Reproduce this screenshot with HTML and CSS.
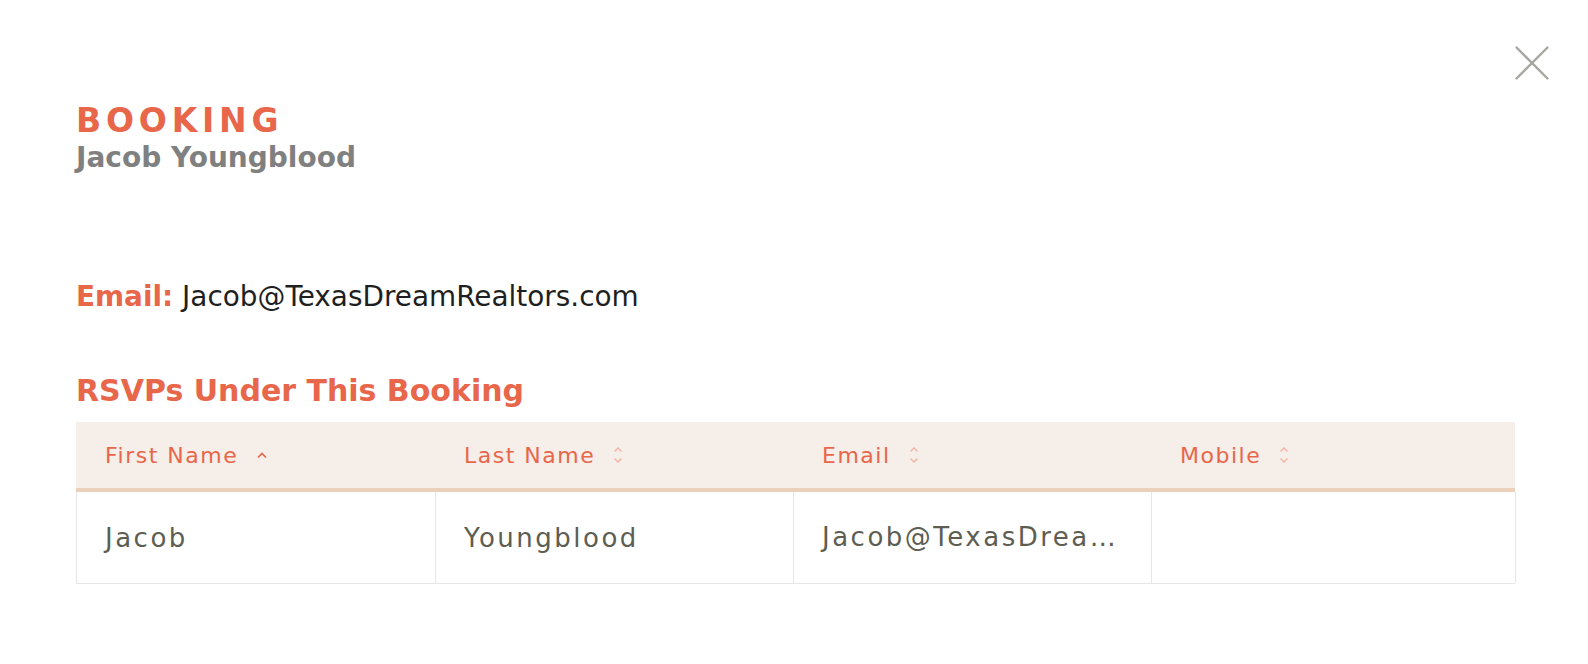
FILE: index.html
```html
<!DOCTYPE html>
<html lang="en">
<head>
<meta charset="utf-8">
<title>Booking</title>
<link rel="stylesheet" href="styles.css">
</head>
<body>
<div class="modal">
  <button class="close" aria-label="Close">
    <svg width="34" height="34" viewBox="0 0 34 34"><path d="M1.5 1.5 L32.5 32.5 M32.5 1.5 L1.5 32.5" stroke="#a7a7a2" stroke-width="2.4" stroke-linecap="round" fill="none"/></svg>
  </button>
  <header class="head">
    <h1 class="title">BOOKING</h1>
    <h2 class="name">Jacob Youngblood</h2>
  </header>
  <p class="email"><span class="label">Email:</span> Jacob@TexasDreamRealtors.com</p>
  <h3 class="section">RSVPs Under This Booking</h3>
  <div class="table">
    <div class="row thead">
      <div class="th">First Name <span class="sort"><svg width="12" height="8" viewBox="0 0 12 8"><path d="M2 6.5 L6 2.5 L10 6.5" stroke="#e8664a" stroke-width="1.7" fill="none"/></svg></span></div>
      <div class="th">Last Name <span class="sort"><svg width="10" height="20" viewBox="0 0 10 20"><path d="M1.5 6.5 L5 3 L8.5 6.5 M1.5 13.5 L5 17 L8.5 13.5" stroke="#f3b3a0" stroke-width="1.4" fill="none"/></svg></span></div>
      <div class="th">Email <span class="sort"><svg width="10" height="20" viewBox="0 0 10 20"><path d="M1.5 6.5 L5 3 L8.5 6.5 M1.5 13.5 L5 17 L8.5 13.5" stroke="#f3b3a0" stroke-width="1.4" fill="none"/></svg></span></div>
      <div class="th">Mobile <span class="sort"><svg width="10" height="20" viewBox="0 0 10 20"><path d="M1.5 6.5 L5 3 L8.5 6.5 M1.5 13.5 L5 17 L8.5 13.5" stroke="#f3b3a0" stroke-width="1.4" fill="none"/></svg></span></div>
    </div>
    <div class="row tbody">
      <div class="td">Jacob</div>
      <div class="td">Youngblood</div>
      <div class="td ellipsis">Jacob@TexasDreamRealtors.com</div>
      <div class="td"></div>
    </div>
  </div>
</div>
</body>
</html>
```
FILE: styles.css
```css
* { box-sizing: border-box; }
html, body { margin: 0; padding: 0; background: #fff; }
body { font-family: "DejaVu Sans", Inter, sans-serif; }
.modal { position: relative; padding: 101px 0 0 76px; width: 1588px; height: 664px; overflow: hidden; }
.close { position: absolute; top: 46px; right: 39px; background: none; border: 0; padding: 0; width: 34px; height: 34px; cursor: pointer; }
.close svg { display: block; }
.head { margin: 0; }
.title { margin: 0; font-size: 33px; line-height: 40px; font-weight: 700; color: #e8664a; letter-spacing: 4.8px; }
.name { margin: 0; font-size: 28px; line-height: 34px; font-weight: 700; color: #808080; }
.email { margin: 105px 0 0; font-size: 27.9px; line-height: 34px; color: #1f1f1f; }
.label { color: #e8664a; font-weight: 700; }
.section { margin: 58px 0 0; font-size: 30px; line-height: 38px; font-weight: 700; color: #e8664a; }
.table { margin-top: 12px; width: 1439px; }
.row { display: grid; grid-template-columns: 359px 358px 358px 364px; }
.thead { background: #f6eee8; height: 70px; border-bottom: 4px solid #ebd0bc; }
.th { display: flex; align-items: center; gap: 18px; padding: 0 0 0 29px; color: #e8664a; font-size: 22px; letter-spacing: 1.5px; }
.sort svg { display: block; }
.tbody { height: 92px; border-left: 1px solid #e6e6e6; border-bottom: 1px solid #e6e6e6; }
.td { display: flex; align-items: center; padding: 0 24px 0 28px; font-size: 26px; color: #5d5d52; letter-spacing: 2.5px; border-right: 1px solid #e6e6e6; min-width: 0; }
.ellipsis { display: block; line-height: 91px; white-space: nowrap; overflow: hidden; text-overflow: ellipsis; }
```
